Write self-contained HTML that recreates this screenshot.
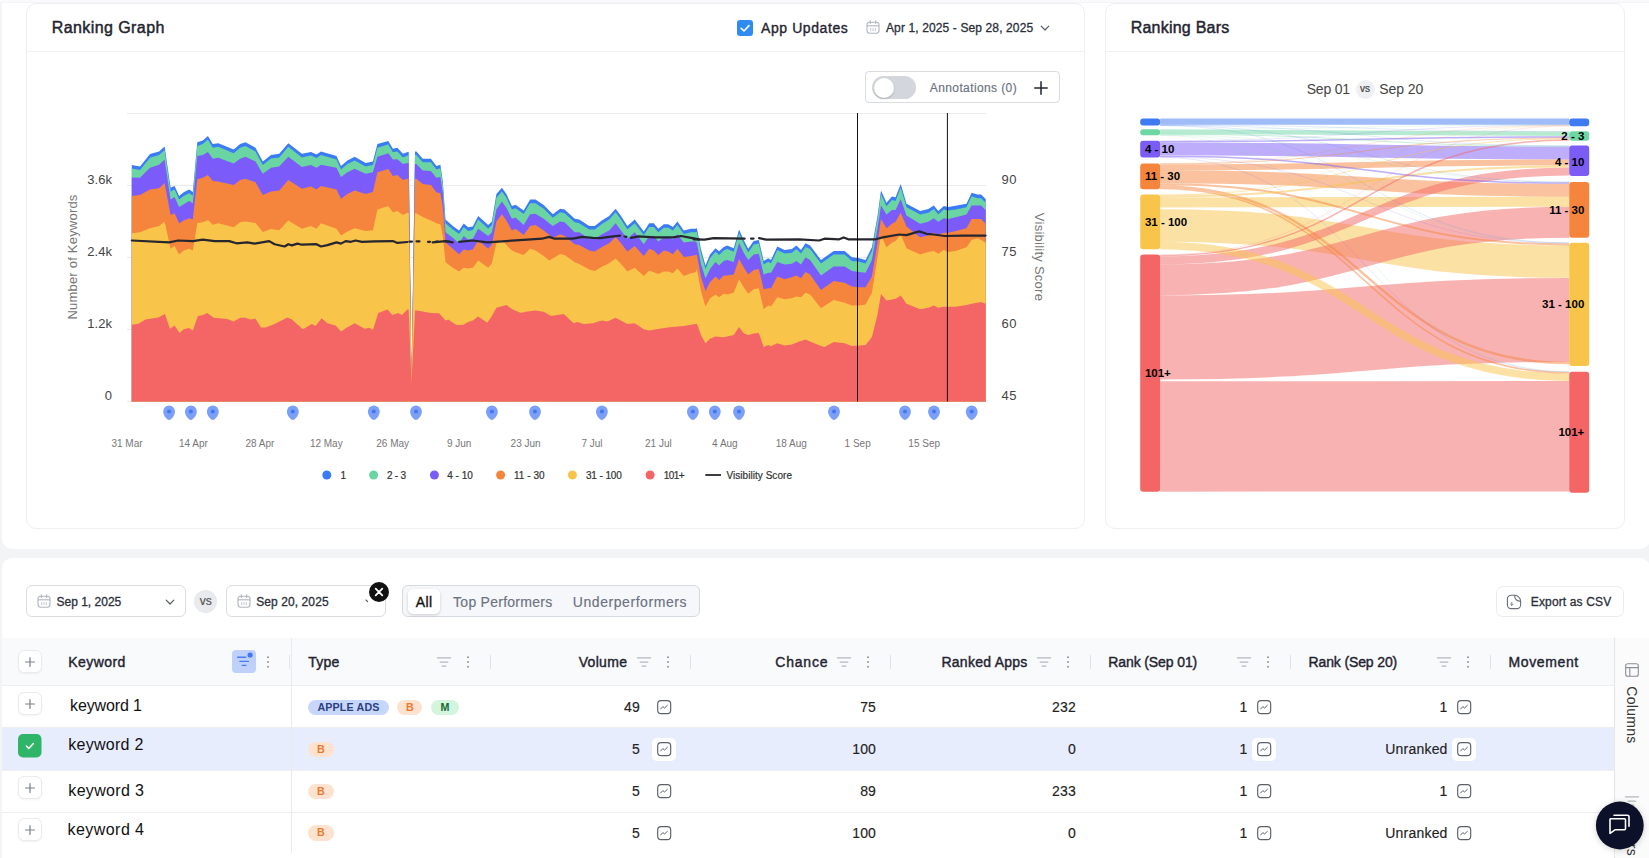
<!DOCTYPE html>
<html><head><meta charset="utf-8"><title>Ranking</title>
<style>
html,body{margin:0;padding:0;}
body{width:1649px;height:858px;overflow:hidden;background:#f3f4f6;position:relative;font-family:"Liberation Sans",sans-serif;}
.t{position:absolute;white-space:nowrap;}
.b{position:absolute;}
svg{overflow:visible;}
</style></head><body>
<div class="b" style="left:1.8px;top:3.0px;width:1648.2px;height:546.3px;background:#fff;border-radius:0 0 10px 10px;"></div>
<div class="b" style="left:0.0px;top:0.0px;width:1649.0px;height:1.6px;background:#fafafc;"></div>
<div class="b" style="left:1.8px;top:557.6px;width:1648.2px;height:312.4px;background:#fff;border-radius:10px 10px 0 0;"></div>
<div class="b" style="left:26.0px;top:3.0px;width:1058.5px;height:525.5px;border:1px solid #edeff2;border-radius:10px;background:#fff;box-sizing:border-box;"></div>
<div class="b" style="left:27.0px;top:51.0px;width:1056.5px;height:1.0px;background:#eef0f2;"></div>
<div class="b" style="left:1105.0px;top:3.0px;width:519.5px;height:525.5px;border:1px solid #edeff2;border-radius:10px;background:#fff;box-sizing:border-box;"></div>
<div class="b" style="left:1106.0px;top:51.0px;width:517.5px;height:1.0px;background:#eef0f2;"></div>
<div class="t" style="left:51.7px;top:17.5px;font-size:16px;color:#1f2430;letter-spacing:0.42px;line-height:20px;-webkit-text-stroke:0.45px #1f2430;">Ranking Graph</div>
<div class="t" style="left:1130.7px;top:17.5px;font-size:16px;color:#1f2430;letter-spacing:0.23px;line-height:20px;-webkit-text-stroke:0.45px #1f2430;">Ranking Bars</div>
<svg class="b" style="left:737.0px;top:19.5px;" width="16" height="16" viewBox="0 0 16 16"><rect x="0" y="0" width="16" height="16" rx="3" fill="#2e8bf0"/><path d="M4.2 8.3 L7 11 L12 5.6" fill="none" stroke="#fff" stroke-width="1.6" stroke-linecap="round" stroke-linejoin="round"/></svg>
<div class="t" style="left:761.1px;top:17.5px;font-size:14px;color:#1f2430;letter-spacing:0.57px;line-height:20px;-webkit-text-stroke:0.35px #1f2430;">App Updates</div>
<svg class="b" style="left:866.0px;top:20.2px;" width="14" height="14.5" viewBox="0 0 14 14.5"><rect x="1" y="2.2" width="12" height="11" rx="2.6" fill="none" stroke="#b0b5c0" stroke-width="1.1"/><path d="M1 5.8H13" stroke="#b0b5c0" stroke-width="1.1"/><path d="M4.3 0.8V3.4M9.7 0.8V3.4" stroke="#b0b5c0" stroke-width="1.1" stroke-linecap="round"/><path d="M4.7 8V11.2M7 8V11.2M9.3 8V11.2" stroke="#b0b5c0" stroke-width="0.75" stroke-linecap="butt"/></svg>
<div class="t" style="left:886.0px;top:17.5px;font-size:12px;color:#2a2f3a;letter-spacing:0.12px;line-height:20px;-webkit-text-stroke:0.3px #2a2f3a;">Apr 1, 2025 - Sep 28, 2025</div>
<svg class="b" style="left:1040.0px;top:23.5px;" width="10" height="8" viewBox="0 0 10 8"><path d="M1.2 2.2 L5 6 L8.8 2.2" fill="none" stroke="#555b66" stroke-width="1.2" stroke-linecap="round" stroke-linejoin="round"/></svg>
<div class="b" style="left:865.0px;top:71.3px;width:195.0px;height:32.2px;border:1px solid #d9dce1;border-radius:4px;box-sizing:border-box;background:#fff;"></div>
<div class="b" style="left:872.2px;top:75.6px;width:43.8px;height:23.8px;background:#d3d6dc;border-radius:12px;"></div>
<div class="b" style="left:874.2px;top:77.5px;width:20.0px;height:20.0px;background:#fff;border-radius:10px;box-shadow:0 1px 2px rgba(0,0,0,.2);"></div>
<div class="t" style="left:929.8px;top:77.5px;font-size:12px;color:#6b7280;letter-spacing:0.39px;line-height:20px;-webkit-text-stroke:0.15px #6b7280;">Annotations (0)</div>
<svg class="b" style="left:1034.0px;top:80.5px;" width="14" height="14" viewBox="0 0 14 14"><path d="M7 0.8V13.2M0.8 7H13.2" stroke="#1f2430" stroke-width="1.5" stroke-linecap="round"/></svg>
<svg class="b" style="left:0.0px;top:0.0px;" width="1100" height="530" viewBox="0 0 1100 530"><path d="M127,113.5 H986" stroke="#e9eaec" stroke-width="1"/><path d="M127,185.5 H986" stroke="#e9eaec" stroke-width="1"/><path d="M127,257.5 H986" stroke="#e9eaec" stroke-width="1"/><path d="M127,329.5 H986" stroke="#e9eaec" stroke-width="1"/><path d="M127,401.5 H986" stroke="#e9eaec" stroke-width="1"/><path d="M131.8,165.0 L131.8,165.0 L140.0,166.5 L150.0,154.1 L159.1,151.4 L164.6,146.5 L170.6,187.8 L174.6,186.0 L179.1,196.0 L183.7,192.3 L189.1,189.6 L192.8,192.0 L197.3,142.3 L202.8,140.5 L207.9,135.9 L212.8,144.1 L218.2,143.2 L233.7,149.6 L240.1,144.1 L245.5,142.3 L255.5,147.8 L262.8,161.4 L271.0,155.0 L279.2,153.8 L288.3,143.2 L301.9,153.8 L311.0,151.9 L316.5,154.5 L321.0,151.4 L336.5,155.9 L341.0,165.9 L347.4,160.5 L354.7,156.8 L365.6,162.9 L372.9,161.4 L377.4,144.1 L388.3,141.0 L392.9,148.7 L397.4,147.8 L402.9,153.8 L407.8,151.9 L408.7,151.9 L411.5,380.5 L415.0,151.4 L416.4,151.4 L422.7,158.7 L430.9,158.7 L436.4,165.9 L440.4,164.7 L442.8,181.4 L445.5,219.6 L452.8,226.0 L459.1,230.5 L463.7,223.6 L468.2,227.3 L472.8,226.5 L478.2,216.0 L488.2,225.1 L491.9,221.4 L496.4,194.1 L501.9,187.8 L506.4,194.1 L511.9,206.0 L515.5,204.7 L523.7,210.5 L530.1,199.6 L535.5,199.6 L543.7,205.1 L552.8,214.2 L560.1,208.7 L564.6,209.6 L574.7,218.7 L579.2,219.6 L589.2,226.0 L594.7,226.0 L601.9,220.5 L609.2,216.0 L615.6,208.7 L621.0,216.0 L627.4,226.0 L634.7,219.6 L643.8,231.4 L649.2,223.3 L653.8,223.3 L658.3,228.7 L663.8,224.2 L668.3,224.2 L672.9,226.9 L677.4,221.4 L683.8,230.5 L691.1,228.7 L695.6,228.7 L696.9,228.2 L700.9,249.1 L705.5,265.5 L710.0,254.6 L715.5,248.2 L719.1,251.3 L723.7,246.9 L727.3,245.5 L733.7,248.2 L739.1,229.5 L743.7,240.0 L748.2,248.8 L753.7,240.9 L758.8,240.0 L763.7,261.0 L768.2,258.2 L771.0,260.0 L777.3,246.4 L784.6,250.0 L791.9,249.1 L796.4,245.5 L801.0,250.0 L805.5,243.3 L810.1,245.5 L821.0,260.0 L833.7,251.0 L844.6,251.0 L851.9,257.3 L859.2,258.2 L865.6,260.0 L871.9,247.3 L877.4,216.4 L881.0,190.6 L886.5,202.7 L891.9,196.4 L895.6,197.3 L900.7,184.0 L906.5,203.7 L920.1,210.9 L928.3,209.1 L933.8,205.5 L938.3,210.9 L943.8,206.0 L948.3,206.9 L955.6,205.8 L966.5,203.7 L971.6,192.7 L977.4,194.6 L981.1,194.6 L985.6,199.1 L985.7,199.1 L985.7,401.4 L131.8,401.4 Z" fill="#3b7cf6"/>
<path d="M131.8,168.6 L131.8,168.6 L140.0,170.1 L150.0,157.7 L159.1,155.0 L164.6,150.1 L170.6,191.4 L174.6,189.6 L179.1,199.6 L183.7,195.9 L189.1,193.2 L192.8,195.6 L197.3,145.9 L202.8,144.1 L207.9,139.5 L212.8,147.7 L218.2,146.8 L233.7,153.2 L240.1,147.7 L245.5,145.9 L255.5,151.4 L262.8,165.0 L271.0,158.6 L279.2,157.4 L288.3,146.8 L301.9,157.4 L311.0,155.5 L316.5,158.1 L321.0,155.0 L336.5,159.5 L341.0,169.5 L347.4,164.1 L354.7,160.4 L365.6,166.5 L372.9,165.0 L377.4,147.7 L388.3,144.6 L392.9,152.3 L397.4,151.4 L402.9,157.4 L407.8,155.5 L408.7,155.5 L411.5,384.1 L415.0,155.0 L416.4,155.0 L422.7,162.3 L430.9,162.3 L436.4,169.5 L440.4,168.3 L442.8,185.0 L445.5,223.2 L452.8,229.6 L459.1,234.1 L463.7,227.2 L468.2,230.9 L472.8,230.1 L478.2,219.6 L488.2,228.7 L491.9,225.0 L496.4,197.7 L501.9,191.4 L506.4,197.7 L511.9,209.6 L515.5,208.3 L523.7,214.1 L530.1,203.2 L535.5,203.2 L543.7,208.7 L552.8,217.8 L560.1,212.3 L564.6,213.2 L574.7,222.3 L579.2,223.2 L589.2,229.6 L594.7,229.6 L601.9,224.1 L609.2,219.6 L615.6,212.3 L621.0,219.6 L627.4,229.6 L634.7,223.2 L643.8,235.0 L649.2,226.9 L653.8,226.9 L658.3,232.3 L663.8,227.8 L668.3,227.8 L672.9,230.5 L677.4,225.0 L683.8,234.1 L691.1,232.3 L695.6,232.3 L696.9,231.8 L700.9,252.7 L705.5,269.1 L710.0,258.2 L715.5,251.8 L719.1,254.9 L723.7,250.5 L727.3,249.1 L733.7,251.8 L739.1,233.1 L743.7,243.6 L748.2,252.4 L753.7,244.5 L758.8,243.6 L763.7,264.6 L768.2,261.8 L771.0,263.6 L777.3,250.0 L784.6,253.6 L791.9,252.7 L796.4,249.1 L801.0,253.6 L805.5,246.9 L810.1,249.1 L821.0,263.6 L833.7,254.6 L844.6,254.6 L851.9,260.9 L859.2,261.8 L865.6,263.6 L871.9,250.9 L877.4,220.0 L881.0,194.2 L886.5,206.3 L891.9,200.0 L895.6,200.9 L900.7,187.6 L906.5,207.3 L920.1,214.5 L928.3,212.7 L933.8,209.1 L938.3,214.5 L943.8,209.6 L948.3,210.5 L955.6,209.4 L966.5,207.3 L971.6,196.3 L977.4,198.2 L981.1,198.2 L985.6,202.7 L985.7,202.7 L985.7,401.4 L131.8,401.4 Z" fill="#6ad5a3"/>
<path d="M131.8,177.4 L131.8,177.4 L140.0,177.8 L150.0,167.8 L159.1,164.7 L164.6,159.6 L170.6,199.6 L174.6,196.9 L179.1,206.9 L183.7,204.2 L189.1,201.1 L192.8,203.2 L197.3,155.9 L202.8,155.0 L207.9,151.9 L212.8,158.7 L218.2,157.8 L233.7,163.6 L240.1,158.7 L245.5,156.8 L255.5,161.4 L262.8,173.8 L271.0,167.8 L279.2,166.5 L288.3,156.8 L301.9,166.9 L311.0,165.0 L316.5,167.8 L321.0,164.7 L336.5,167.8 L341.0,176.9 L347.4,172.3 L354.7,168.7 L365.6,173.8 L372.9,172.3 L377.4,156.8 L388.3,153.2 L392.9,159.6 L397.4,159.2 L402.9,164.1 L407.8,162.9 L408.7,162.9 L411.5,380.8 L415.0,164.1 L416.4,164.1 L422.7,170.5 L430.9,170.9 L436.4,177.8 L440.4,176.9 L442.8,192.3 L445.5,232.3 L452.8,237.8 L459.1,243.3 L463.7,236.0 L468.2,239.6 L472.8,238.7 L478.2,228.7 L488.2,236.0 L491.9,232.3 L496.4,209.6 L501.9,201.4 L506.4,207.8 L511.9,218.7 L515.5,217.4 L523.7,225.1 L530.1,214.2 L535.5,213.8 L543.7,218.7 L552.8,226.0 L560.1,221.4 L564.6,222.3 L574.7,232.3 L579.2,232.3 L589.2,238.7 L594.7,238.7 L601.9,234.2 L609.2,230.5 L615.6,223.3 L621.0,230.5 L627.4,238.7 L634.7,232.3 L643.8,244.2 L649.2,236.0 L653.8,236.0 L658.3,241.4 L663.8,237.4 L668.3,236.9 L672.9,239.6 L677.4,234.2 L683.8,242.4 L691.1,241.4 L695.6,241.4 L696.9,242.8 L700.9,263.7 L705.5,278.2 L710.0,269.1 L715.5,261.9 L719.1,265.5 L723.7,261.0 L727.3,260.0 L733.7,261.9 L739.1,242.8 L743.7,252.8 L748.2,260.0 L753.7,254.6 L758.8,253.7 L763.7,274.6 L768.2,272.8 L771.0,272.8 L777.3,261.9 L784.6,264.6 L791.9,263.7 L796.4,261.0 L801.0,264.6 L805.5,257.3 L810.1,260.0 L821.0,275.5 L833.7,266.4 L844.6,266.4 L851.9,271.0 L859.2,271.9 L865.6,272.8 L871.9,260.0 L877.4,229.1 L881.0,205.5 L886.5,214.6 L891.9,210.0 L895.6,210.0 L900.7,199.1 L906.5,215.5 L920.1,223.7 L928.3,221.8 L933.8,218.2 L938.3,221.8 L943.8,218.2 L948.3,219.1 L955.6,217.3 L966.5,214.6 L971.6,205.5 L977.4,205.5 L981.1,205.5 L985.6,210.0 L985.7,210.0 L985.7,401.4 L131.8,401.4 Z" fill="#7b5cfa"/>
<path d="M131.8,196.0 L131.8,196.0 L140.0,195.1 L150.0,189.6 L159.1,188.3 L164.6,182.9 L170.6,215.1 L174.6,213.2 L179.1,223.3 L183.7,220.5 L189.1,218.2 L192.8,219.6 L197.3,179.2 L202.8,177.8 L207.9,175.0 L212.8,181.0 L218.2,181.4 L233.7,185.0 L240.1,180.0 L245.5,178.7 L255.5,182.3 L262.8,195.1 L271.0,191.4 L279.2,190.5 L288.3,180.0 L301.9,188.7 L311.0,186.5 L316.5,189.6 L321.0,186.0 L336.5,189.6 L341.0,198.7 L347.4,194.1 L354.7,190.5 L365.6,194.1 L372.9,192.0 L377.4,172.3 L388.3,169.0 L392.9,176.0 L397.4,175.0 L402.9,180.0 L407.8,178.7 L408.7,178.7 L411.5,381.2 L415.0,178.7 L416.4,178.7 L422.7,184.1 L430.9,185.0 L436.4,192.3 L440.4,193.2 L442.8,206.9 L445.5,242.4 L452.8,248.7 L459.1,254.2 L463.7,249.6 L468.2,250.5 L472.8,249.6 L478.2,240.5 L488.2,248.7 L491.9,244.2 L496.4,221.4 L501.9,214.2 L506.4,220.5 L511.9,230.5 L515.5,228.7 L523.7,235.1 L530.1,226.0 L535.5,225.1 L543.7,230.5 L552.8,237.8 L560.1,234.2 L564.6,236.0 L574.7,244.2 L579.2,245.1 L589.2,250.5 L594.7,251.5 L601.9,246.9 L609.2,243.3 L615.6,236.9 L621.0,243.3 L627.4,251.5 L634.7,246.0 L643.8,256.0 L649.2,248.7 L653.8,250.5 L658.3,255.1 L663.8,250.5 L668.3,251.5 L672.9,254.2 L677.4,248.7 L683.8,256.9 L691.1,256.0 L695.6,255.1 L696.9,255.0 L700.9,276.4 L705.5,291.0 L710.0,281.9 L715.5,276.4 L719.1,280.1 L723.7,275.5 L727.3,275.5 L733.7,274.6 L739.1,259.1 L743.7,267.3 L748.2,274.6 L753.7,270.1 L758.8,269.1 L763.7,289.2 L768.2,288.2 L771.0,288.2 L777.3,276.4 L784.6,279.2 L791.9,277.3 L796.4,275.5 L801.0,278.2 L805.5,271.9 L810.1,274.6 L821.0,290.1 L833.7,281.0 L844.6,282.8 L851.9,286.4 L859.2,287.3 L865.6,287.3 L871.9,276.4 L877.4,243.7 L881.0,219.1 L886.5,228.2 L891.9,223.7 L895.6,221.8 L900.7,212.7 L906.5,226.4 L920.1,237.3 L928.3,235.5 L933.8,232.8 L938.3,234.6 L943.8,232.8 L948.3,232.8 L955.6,230.9 L966.5,228.2 L971.6,219.1 L977.4,219.1 L981.1,219.1 L985.6,223.7 L985.7,223.7 L985.7,401.4 L131.8,401.4 Z" fill="#f5853d"/>
<path d="M131.8,233.3 L131.8,233.3 L140.0,232.3 L150.0,228.3 L159.1,226.0 L164.6,221.4 L170.6,248.7 L174.6,246.0 L179.1,254.5 L183.7,250.5 L189.1,248.7 L192.8,250.5 L197.3,222.9 L202.8,222.3 L207.9,220.0 L212.8,224.7 L218.2,223.3 L233.7,227.3 L240.1,222.3 L245.5,221.4 L255.5,222.9 L262.8,232.0 L271.0,229.1 L279.2,230.2 L288.3,220.5 L301.9,228.7 L311.0,226.0 L316.5,228.7 L321.0,223.3 L336.5,228.7 L341.0,235.6 L347.4,231.4 L354.7,228.3 L365.6,230.9 L372.9,230.2 L377.4,209.6 L388.3,206.0 L392.9,212.3 L397.4,210.9 L402.9,215.1 L407.8,212.7 L408.7,212.7 L411.5,381.6 L415.0,213.2 L416.4,213.2 L422.7,216.9 L430.9,220.5 L436.4,223.3 L440.4,224.2 L442.8,236.0 L445.5,262.3 L452.8,267.7 L459.1,271.4 L463.7,267.7 L468.2,268.6 L472.8,267.7 L478.2,260.5 L488.2,267.7 L491.9,263.2 L496.4,243.3 L501.9,239.6 L506.4,245.1 L511.9,250.5 L516.4,252.4 L523.7,255.1 L530.1,248.7 L535.5,250.5 L543.7,256.0 L549.2,260.5 L552.8,258.6 L560.1,254.1 L564.6,255.0 L574.7,262.3 L579.2,264.1 L589.2,269.6 L594.7,271.0 L601.9,266.8 L609.2,263.2 L615.6,258.6 L621.0,264.1 L627.4,271.4 L634.7,267.7 L643.8,275.9 L649.2,270.5 L653.8,272.3 L658.3,274.1 L663.8,271.4 L668.3,271.4 L672.9,273.2 L677.4,268.6 L683.8,275.9 L691.1,273.2 L695.6,272.3 L696.9,269.1 L700.9,291.0 L705.5,306.4 L710.0,298.3 L715.5,294.6 L719.1,297.3 L723.7,293.7 L727.3,294.6 L733.7,292.8 L739.1,279.2 L743.7,287.3 L748.2,293.7 L753.7,289.2 L758.8,288.2 L763.7,309.2 L768.2,305.5 L771.0,306.4 L777.3,297.3 L784.6,299.2 L791.9,298.3 L796.4,296.4 L801.0,297.3 L805.5,292.8 L810.1,294.6 L821.0,308.3 L833.7,300.1 L844.6,302.8 L851.9,305.5 L859.2,305.5 L865.6,304.6 L871.9,292.8 L877.4,258.2 L881.0,235.5 L886.5,247.3 L891.9,242.8 L895.6,240.9 L900.7,234.6 L906.5,248.2 L920.1,254.6 L928.3,251.9 L933.8,251.0 L938.3,253.7 L943.8,250.0 L948.3,251.9 L955.6,251.0 L966.5,247.3 L971.6,240.0 L977.4,238.2 L981.1,240.0 L985.6,242.8 L985.7,242.8 L985.7,401.4 L131.8,401.4 Z" fill="#f9c44a"/>
<path d="M131.8,324.7 L131.8,324.7 L138.2,323.8 L145.5,319.6 L158.2,317.4 L164.9,314.1 L170.0,328.7 L174.6,325.6 L179.5,332.9 L183.7,329.2 L189.1,328.1 L192.8,330.5 L197.9,315.9 L202.8,315.0 L207.3,312.9 L213.7,317.8 L227.3,319.0 L233.7,321.4 L240.1,317.8 L245.5,317.8 L250.1,319.6 L255.5,318.7 L261.0,327.4 L265.5,327.4 L274.6,324.1 L287.4,317.4 L291.9,319.6 L302.8,329.2 L311.9,324.1 L315.6,326.0 L321.6,318.3 L327.4,323.2 L335.6,325.6 L341.0,331.4 L346.5,327.8 L354.7,323.2 L364.7,328.7 L369.2,327.8 L372.9,330.0 L378.3,312.9 L387.4,309.6 L392.5,315.0 L398.0,312.9 L402.0,315.0 L407.4,309.6 L408.7,309.6 L411.5,382.5 L415.0,310.5 L416.4,310.5 L422.7,311.4 L430.9,312.9 L439.1,313.2 L445.5,320.5 L448.2,319.6 L456.4,325.0 L462.8,325.0 L468.2,321.9 L472.8,320.5 L478.2,316.5 L487.3,322.7 L491.9,315.9 L496.4,307.8 L506.4,305.0 L512.8,309.6 L521.0,312.9 L525.5,311.8 L535.5,310.5 L543.7,311.8 L551.0,315.9 L563.7,314.1 L573.7,323.2 L577.4,321.9 L583.7,324.1 L592.8,323.2 L601.9,320.5 L607.4,321.4 L615.6,317.8 L627.4,324.1 L634.7,323.2 L643.8,329.2 L649.2,330.5 L654.7,329.6 L667.4,327.4 L683.8,326.0 L695.6,324.1 L696.9,323.8 L700.9,335.0 L705.5,343.2 L710.0,338.7 L715.5,336.5 L723.7,337.2 L733.7,335.0 L739.1,326.9 L743.7,333.2 L748.2,335.0 L753.7,333.6 L758.8,332.9 L763.7,346.9 L768.2,345.1 L771.0,346.3 L777.3,343.2 L784.6,345.6 L791.9,344.5 L799.2,341.4 L805.5,339.6 L810.1,341.4 L821.0,346.0 L824.6,346.9 L833.7,342.0 L844.6,343.2 L851.9,346.0 L859.2,345.6 L865.6,345.1 L871.9,336.9 L877.4,315.0 L881.0,294.1 L886.5,300.5 L891.9,299.6 L895.6,298.7 L900.7,295.4 L906.5,303.8 L920.1,309.2 L928.3,307.8 L933.8,305.6 L938.3,307.8 L943.8,306.8 L948.3,306.8 L955.6,306.8 L966.5,305.0 L971.6,303.8 L981.1,301.9 L985.6,303.8 L985.7,303.8 L985.7,401.4 L131.8,401.4 Z" fill="#f46666"/>
<path d="M131.8,240.5 L169.1,242.4 L178.2,240.5 L192.8,241.1 L202.8,239.6 L214.6,241.1 L229.2,241.1 L236.4,243.3 L247.3,242.4 L254.6,243.6 L269.2,241.1 L274.6,244.2 L284.6,246.5 L288.3,244.2 L291.9,245.4 L297.4,243.6 L301.9,244.7 L316.5,244.2 L321.0,246.5 L327.4,245.1 L336.5,242.4 L341.0,243.6 L345.6,241.1 L351.0,241.8 L355.6,240.5 L362.0,241.8 L374.7,241.4 L392.9,241.1 L397.4,242.9 L407.4,242.0" fill="none" stroke="#26262e" stroke-width="2.2" stroke-linejoin="round" stroke-linecap="round"/>
<path d="M432.7,242.4 L445.5,241.1 L452.8,242.4" fill="none" stroke="#26262e" stroke-width="2.2" stroke-linejoin="round" stroke-linecap="round"/>
<path d="M459.1,241.8 L472.8,240.5 L487.3,242.4 L501.9,241.4 L527.3,239.6 L541.9,238.7 L549.2,236.9 L554.6,238.7 L572.8,238.7 L581.9,236.9 L592.8,237.8 L600.1,238.2 L609.2,236.9 L620.1,235.6" fill="none" stroke="#26262e" stroke-width="2.2" stroke-linejoin="round" stroke-linecap="round"/>
<path d="M631.0,237.8 L638.3,236.4 L654.7,237.4 L672.9,237.4 L681.1,236.0 L691.1,237.8 L699.3,239.3" fill="none" stroke="#26262e" stroke-width="2.2" stroke-linejoin="round" stroke-linecap="round"/>
<path d="M693.6,239.3 L704.6,239.6 L713.7,238.2 L744.6,238.7" fill="none" stroke="#26262e" stroke-width="2.2" stroke-linejoin="round" stroke-linecap="round"/>
<path d="M759.1,238.2 L766.4,239.6 L799.2,239.3 L819.2,240.5 L824.6,238.7 L839.2,239.3 L843.7,237.4 L848.3,239.3 L875.6,239.3 L882.8,237.4 L899.2,234.5 L906.5,235.1 L919.2,231.4 L926.5,233.8 L933.8,234.5 L944.7,236.0 L962.9,235.6 L985.6,235.6" fill="none" stroke="#26262e" stroke-width="2.2" stroke-linejoin="round" stroke-linecap="round"/>
<path d="M409.5,241.6 L412.0,241.6" stroke="#26262e" stroke-width="2.2" stroke-linecap="round"/>
<path d="M416.5,241.3 L419.5,241.3" stroke="#26262e" stroke-width="2.2" stroke-linecap="round"/>
<path d="M428.0,241.8 L430.0,241.8" stroke="#26262e" stroke-width="2.2" stroke-linecap="round"/>
<path d="M436.0,241.5 L438.0,241.5" stroke="#26262e" stroke-width="2.2" stroke-linecap="round"/>
<path d="M446.0,241.5 L449.0,241.5" stroke="#26262e" stroke-width="2.2" stroke-linecap="round"/>
<path d="M624.5,236.5 L626.5,236.8" stroke="#26262e" stroke-width="2.2" stroke-linecap="round"/>
<path d="M751.0,238.6 L753.5,238.6" stroke="#26262e" stroke-width="2.2" stroke-linecap="round"/><path d="M857.5,113 V401.5" stroke="#111" stroke-width="1"/><path d="M947.4,113 V401.5" stroke="#111" stroke-width="1"/><path d="M169.1,419.9 C166.9,419.9 163.2,415.5 163.2,411.5 A5.9,5.9 0 1 1 175.0,411.5 C175.0,415.5 171.3,419.9 169.1,419.9Z" fill="#7c9ff8"/><circle cx="169.1" cy="411.4" r="2" fill="#3f78f1"/><path d="M190.9,419.9 C188.7,419.9 185.0,415.5 185.0,411.5 A5.9,5.9 0 1 1 196.8,411.5 C196.8,415.5 193.1,419.9 190.9,419.9Z" fill="#7c9ff8"/><circle cx="190.9" cy="411.4" r="2" fill="#3f78f1"/><path d="M212.8,419.9 C210.6,419.9 206.9,415.5 206.9,411.5 A5.9,5.9 0 1 1 218.7,411.5 C218.7,415.5 215.0,419.9 212.8,419.9Z" fill="#7c9ff8"/><circle cx="212.8" cy="411.4" r="2" fill="#3f78f1"/><path d="M292.8,419.9 C290.6,419.9 286.9,415.5 286.9,411.5 A5.9,5.9 0 1 1 298.7,411.5 C298.7,415.5 295.0,419.9 292.8,419.9Z" fill="#7c9ff8"/><circle cx="292.8" cy="411.4" r="2" fill="#3f78f1"/><path d="M373.8,419.9 C371.6,419.9 367.9,415.5 367.9,411.5 A5.9,5.9 0 1 1 379.7,411.5 C379.7,415.5 376.0,419.9 373.8,419.9Z" fill="#7c9ff8"/><circle cx="373.8" cy="411.4" r="2" fill="#3f78f1"/><path d="M416.0,419.9 C413.8,419.9 410.1,415.5 410.1,411.5 A5.9,5.9 0 1 1 421.9,411.5 C421.9,415.5 418.2,419.9 416.0,419.9Z" fill="#7c9ff8"/><circle cx="416.0" cy="411.4" r="2" fill="#3f78f1"/><path d="M491.9,419.9 C489.7,419.9 486.0,415.5 486.0,411.5 A5.9,5.9 0 1 1 497.8,411.5 C497.8,415.5 494.1,419.9 491.9,419.9Z" fill="#7c9ff8"/><circle cx="491.9" cy="411.4" r="2" fill="#3f78f1"/><path d="M535.0,419.9 C532.8,419.9 529.1,415.5 529.1,411.5 A5.9,5.9 0 1 1 540.9,411.5 C540.9,415.5 537.2,419.9 535.0,419.9Z" fill="#7c9ff8"/><circle cx="535.0" cy="411.4" r="2" fill="#3f78f1"/><path d="M601.9,419.9 C599.7,419.9 596.0,415.5 596.0,411.5 A5.9,5.9 0 1 1 607.8,411.5 C607.8,415.5 604.1,419.9 601.9,419.9Z" fill="#7c9ff8"/><circle cx="601.9" cy="411.4" r="2" fill="#3f78f1"/><path d="M692.9,419.9 C690.7,419.9 687.0,415.5 687.0,411.5 A5.9,5.9 0 1 1 698.8,411.5 C698.8,415.5 695.1,419.9 692.9,419.9Z" fill="#7c9ff8"/><circle cx="692.9" cy="411.4" r="2" fill="#3f78f1"/><path d="M714.8,419.9 C712.6,419.9 708.9,415.5 708.9,411.5 A5.9,5.9 0 1 1 720.7,411.5 C720.7,415.5 717.0,419.9 714.8,419.9Z" fill="#7c9ff8"/><circle cx="714.8" cy="411.4" r="2" fill="#3f78f1"/><path d="M739.0,419.9 C736.8,419.9 733.1,415.5 733.1,411.5 A5.9,5.9 0 1 1 744.9,411.5 C744.9,415.5 741.2,419.9 739.0,419.9Z" fill="#7c9ff8"/><circle cx="739.0" cy="411.4" r="2" fill="#3f78f1"/><path d="M834.0,419.9 C831.8,419.9 828.1,415.5 828.1,411.5 A5.9,5.9 0 1 1 839.9,411.5 C839.9,415.5 836.2,419.9 834.0,419.9Z" fill="#7c9ff8"/><circle cx="834.0" cy="411.4" r="2" fill="#3f78f1"/><path d="M905.0,419.9 C902.8,419.9 899.1,415.5 899.1,411.5 A5.9,5.9 0 1 1 910.9,411.5 C910.9,415.5 907.2,419.9 905.0,419.9Z" fill="#7c9ff8"/><circle cx="905.0" cy="411.4" r="2" fill="#3f78f1"/><path d="M934.0,419.9 C931.8,419.9 928.1,415.5 928.1,411.5 A5.9,5.9 0 1 1 939.9,411.5 C939.9,415.5 936.2,419.9 934.0,419.9Z" fill="#7c9ff8"/><circle cx="934.0" cy="411.4" r="2" fill="#3f78f1"/><path d="M971.7,419.9 C969.5,419.9 965.8,415.5 965.8,411.5 A5.9,5.9 0 1 1 977.6,411.5 C977.6,415.5 973.9,419.9 971.7,419.9Z" fill="#7c9ff8"/><circle cx="971.7" cy="411.4" r="2" fill="#3f78f1"/><circle cx="326.8" cy="475" r="4.5" fill="#3b7cf6"/><circle cx="373.6" cy="475" r="4.5" fill="#6ad5a3"/><circle cx="434.4" cy="475" r="4.5" fill="#7b5cfa"/><circle cx="500.6" cy="475" r="4.5" fill="#f5853d"/><circle cx="572.4" cy="475" r="4.5" fill="#f9c44a"/><circle cx="650.1" cy="475" r="4.5" fill="#f46666"/><path d="M705.3,475 H721" stroke="#26262e" stroke-width="1.8"/></svg>
<div class="t" style="right:1537.1px;top:170.0px;font-size:13px;color:#444;letter-spacing:0.00px;line-height:20px;">3.6k</div>
<div class="t" style="right:1537.1px;top:242.3px;font-size:13px;color:#444;letter-spacing:0.00px;line-height:20px;">2.4k</div>
<div class="t" style="right:1537.1px;top:314.2px;font-size:13px;color:#444;letter-spacing:0.00px;line-height:20px;">1.2k</div>
<div class="t" style="right:1537.1px;top:386.0px;font-size:13px;color:#444;letter-spacing:0.00px;line-height:20px;">0</div>
<div class="t" style="left:1001.5px;top:170.0px;font-size:13px;color:#444;letter-spacing:0.44px;line-height:20px;">90</div>
<div class="t" style="left:1001.5px;top:242.3px;font-size:13px;color:#444;letter-spacing:0.44px;line-height:20px;">75</div>
<div class="t" style="left:1001.5px;top:314.2px;font-size:13px;color:#444;letter-spacing:0.44px;line-height:20px;">60</div>
<div class="t" style="left:1001.5px;top:386.0px;font-size:13px;color:#444;letter-spacing:0.44px;line-height:20px;">45</div>
<div class="t" style="left:27.0px;width:200px;text-align:center;top:434.1px;font-size:10px;color:#777;letter-spacing:0.00px;line-height:20px;">31 Mar</div>
<div class="t" style="left:93.4px;width:200px;text-align:center;top:434.1px;font-size:10px;color:#777;letter-spacing:0.00px;line-height:20px;">14 Apr</div>
<div class="t" style="left:159.9px;width:200px;text-align:center;top:434.1px;font-size:10px;color:#777;letter-spacing:0.00px;line-height:20px;">28 Apr</div>
<div class="t" style="left:226.3px;width:200px;text-align:center;top:434.1px;font-size:10px;color:#777;letter-spacing:0.00px;line-height:20px;">12 May</div>
<div class="t" style="left:292.7px;width:200px;text-align:center;top:434.1px;font-size:10px;color:#777;letter-spacing:0.00px;line-height:20px;">26 May</div>
<div class="t" style="left:359.2px;width:200px;text-align:center;top:434.1px;font-size:10px;color:#777;letter-spacing:0.00px;line-height:20px;">9 Jun</div>
<div class="t" style="left:425.6px;width:200px;text-align:center;top:434.1px;font-size:10px;color:#777;letter-spacing:0.00px;line-height:20px;">23 Jun</div>
<div class="t" style="left:492.0px;width:200px;text-align:center;top:434.1px;font-size:10px;color:#777;letter-spacing:0.00px;line-height:20px;">7 Jul</div>
<div class="t" style="left:558.4px;width:200px;text-align:center;top:434.1px;font-size:10px;color:#777;letter-spacing:0.00px;line-height:20px;">21 Jul</div>
<div class="t" style="left:624.9px;width:200px;text-align:center;top:434.1px;font-size:10px;color:#777;letter-spacing:0.00px;line-height:20px;">4 Aug</div>
<div class="t" style="left:691.3px;width:200px;text-align:center;top:434.1px;font-size:10px;color:#777;letter-spacing:0.00px;line-height:20px;">18 Aug</div>
<div class="t" style="left:757.7px;width:200px;text-align:center;top:434.1px;font-size:10px;color:#777;letter-spacing:0.00px;line-height:20px;">1 Sep</div>
<div class="t" style="left:824.2px;width:200px;text-align:center;top:434.1px;font-size:10px;color:#777;letter-spacing:0.00px;line-height:20px;">15 Sep</div>
<div class="t" style="left:340.6px;top:465.5px;font-size:10px;color:#333;letter-spacing:0.00px;line-height:20px;-webkit-text-stroke:0.2px #333;">1</div>
<div class="t" style="left:386.9px;top:465.5px;font-size:10px;color:#333;letter-spacing:-0.20px;line-height:20px;-webkit-text-stroke:0.2px #333;">2 - 3</div>
<div class="t" style="left:447.3px;top:465.5px;font-size:10px;color:#333;letter-spacing:-0.01px;line-height:20px;-webkit-text-stroke:0.2px #333;">4 - 10</div>
<div class="t" style="left:514.0px;top:465.5px;font-size:10px;color:#333;letter-spacing:0.03px;line-height:20px;-webkit-text-stroke:0.2px #333;">11 - 30</div>
<div class="t" style="left:585.9px;top:465.5px;font-size:10px;color:#333;letter-spacing:-0.10px;line-height:20px;-webkit-text-stroke:0.2px #333;">31 - 100</div>
<div class="t" style="left:663.8px;top:465.5px;font-size:10px;color:#333;letter-spacing:-0.54px;line-height:20px;-webkit-text-stroke:0.2px #333;">101+</div>
<div class="t" style="left:726.5px;top:465.5px;font-size:10px;color:#333;letter-spacing:0.04px;line-height:20px;-webkit-text-stroke:0.2px #333;">Visibility Score</div>
<div class="t" style="left:-77.4px;top:247.0px;width:300px;text-align:center;font-size:13px;color:#777;letter-spacing:0.21px;line-height:20px;transform:rotate(-90deg);">Number of Keywords</div>
<div class="t" style="left:888.6px;top:247.0px;width:300px;text-align:center;font-size:13px;color:#777;letter-spacing:0.25px;line-height:20px;transform:rotate(90deg);">Visibility Score</div>
<svg class="b" style="left:1100.0px;top:100.0px;" width="540" height="420" viewBox="1100 100 540 420"><path d="M1160.2,436.5 C1364.7,436.5 1364.7,436.2 1569.2,436.2" fill="none" stroke="#f46666" stroke-opacity="0.50" stroke-width="110.40"/>
<path d="M1160.2,337.4 C1364.7,337.4 1364.7,319.9 1569.2,319.9" fill="none" stroke="#f46666" stroke-opacity="0.50" stroke-width="84.00"/>
<path d="M1160.2,225.4 C1364.7,225.4 1364.7,261.6 1569.2,261.6" fill="none" stroke="#f9c44a" stroke-opacity="0.50" stroke-width="32.50"/>
<path d="M1160.2,279.9 C1364.7,279.9 1364.7,222.2 1569.2,222.2" fill="none" stroke="#f46666" stroke-opacity="0.50" stroke-width="31.00"/>
<path d="M1160.2,148.9 C1364.7,148.9 1364.7,153.0 1569.2,153.0" fill="none" stroke="#7b5cf5" stroke-opacity="0.50" stroke-width="12.90"/>
<path d="M1160.2,176.8 C1364.7,176.8 1364.7,190.2 1569.2,190.2" fill="none" stroke="#f5853d" stroke-opacity="0.50" stroke-width="12.90"/>
<path d="M1160.2,202.5 C1364.7,202.5 1364.7,201.7 1569.2,201.7" fill="none" stroke="#f9c44a" stroke-opacity="0.50" stroke-width="10.00"/>
<path d="M1160.2,260.4 C1364.7,260.4 1364.7,171.5 1569.2,171.5" fill="none" stroke="#f46666" stroke-opacity="0.50" stroke-width="8.00"/>
<path d="M1160.2,245.4 C1364.7,245.4 1364.7,377.2 1569.2,377.2" fill="none" stroke="#f9c44a" stroke-opacity="0.50" stroke-width="7.50"/>
<path d="M1160.2,121.7 C1364.7,121.7 1364.7,121.7 1569.2,121.7" fill="none" stroke="#3f7af2" stroke-opacity="0.50" stroke-width="6.30"/>
<path d="M1160.2,167.4 C1364.7,167.4 1364.7,162.5 1569.2,162.5" fill="none" stroke="#f5853d" stroke-opacity="0.50" stroke-width="6.00"/>
<path d="M1160.2,131.7 C1364.7,131.7 1364.7,133.9 1569.2,133.9" fill="none" stroke="#6ed7a3" stroke-opacity="0.50" stroke-width="4.40"/>
<path d="M1160.2,186.5 C1364.7,186.5 1364.7,363.1 1569.2,363.1" fill="none" stroke="#f5853d" stroke-opacity="0.50" stroke-width="2.40"/>
<path d="M1160.2,184.3 C1364.7,184.3 1364.7,244.4 1569.2,244.4" fill="none" stroke="#f5853d" stroke-opacity="0.50" stroke-width="2.00"/>
<path d="M1160.2,196.5 C1364.7,196.5 1364.7,166.5 1569.2,166.5" fill="none" stroke="#f9c44a" stroke-opacity="0.50" stroke-width="2.00"/>
<path d="M1160.2,141.8 C1364.7,141.8 1364.7,136.9 1569.2,136.9" fill="none" stroke="#7b5cf5" stroke-opacity="0.50" stroke-width="1.50"/>
<path d="M1160.2,156.2 C1364.7,156.2 1364.7,183.1 1569.2,183.1" fill="none" stroke="#7b5cf5" stroke-opacity="0.50" stroke-width="1.50"/>
<path d="M1160.2,188.5 C1364.7,188.5 1364.7,372.8 1569.2,372.8" fill="none" stroke="#f5853d" stroke-opacity="0.50" stroke-width="1.50"/>
<path d="M1160.2,255.7 C1364.7,255.7 1364.7,140.0 1569.2,140.0" fill="none" stroke="#f46666" stroke-opacity="0.50" stroke-width="1.50"/>
<path d="M1160.2,134.3 C1364.7,134.3 1364.7,146.2 1569.2,146.2" fill="none" stroke="#6ed7a3" stroke-opacity="0.50" stroke-width="0.80"/>
<path d="M1160.2,164.0 C1364.7,164.0 1364.7,138.0 1569.2,138.0" fill="none" stroke="#f5853d" stroke-opacity="0.50" stroke-width="0.80"/>
<path d="M1160.2,195.1 C1364.7,195.1 1364.7,138.8 1569.2,138.8" fill="none" stroke="#f9c44a" stroke-opacity="0.50" stroke-width="0.80"/>
<path d="M1160.2,125.0 C1364.7,125.0 1364.7,131.5 1569.2,131.5" fill="none" stroke="#3f7af2" stroke-opacity="0.35" stroke-width="0.45"/>
<path d="M1160.2,157.1 C1364.7,157.1 1364.7,243.2 1569.2,243.2" fill="none" stroke="#7b5cf5" stroke-opacity="0.35" stroke-width="0.45"/>
<path d="M1160.2,254.7 C1364.7,254.7 1364.7,126.0 1569.2,126.0" fill="none" stroke="#f46666" stroke-opacity="0.35" stroke-width="0.45"/>
<path d="M1160.2,129.3 C1364.7,129.3 1364.7,125.0 1569.2,125.0" fill="none" stroke="#6ed7a3" stroke-opacity="0.35" stroke-width="0.45"/>
<path d="M1160.2,134.9 C1364.7,134.9 1364.7,182.2 1569.2,182.2" fill="none" stroke="#6ed7a3" stroke-opacity="0.35" stroke-width="0.45"/>
<path d="M1160.2,140.8 C1364.7,140.8 1364.7,125.2 1569.2,125.2" fill="none" stroke="#7b5cf5" stroke-opacity="0.35" stroke-width="0.45"/>
<path d="M1160.2,125.3 C1364.7,125.3 1364.7,145.7 1569.2,145.7" fill="none" stroke="#3f7af2" stroke-opacity="0.35" stroke-width="0.45"/>
<path d="M1160.2,135.1 C1364.7,135.1 1364.7,242.9 1569.2,242.9" fill="none" stroke="#6ed7a3" stroke-opacity="0.35" stroke-width="0.45"/>
<path d="M1160.2,157.4 C1364.7,157.4 1364.7,371.9 1569.2,371.9" fill="none" stroke="#7b5cf5" stroke-opacity="0.35" stroke-width="0.45"/>
<path d="M1160.2,163.5 C1364.7,163.5 1364.7,125.5 1569.2,125.5" fill="none" stroke="#f5853d" stroke-opacity="0.35" stroke-width="0.45"/>
<path d="M1160.2,194.6 C1364.7,194.6 1364.7,125.7 1569.2,125.7" fill="none" stroke="#f9c44a" stroke-opacity="0.35" stroke-width="0.45"/>
<path d="M1160.2,125.5 C1364.7,125.5 1364.7,182.0 1569.2,182.0" fill="none" stroke="#3f7af2" stroke-opacity="0.35" stroke-width="0.45"/>
<path d="M1160.2,125.5 C1364.7,125.5 1364.7,242.8 1569.2,242.8" fill="none" stroke="#3f7af2" stroke-opacity="0.35" stroke-width="0.45"/>
<path d="M1160.2,135.3 C1364.7,135.3 1364.7,371.8 1569.2,371.8" fill="none" stroke="#6ed7a3" stroke-opacity="0.35" stroke-width="0.45"/>
<rect x="1140.2" y="118.5" width="20.0" height="7.1" rx="3.0" fill="#3f7af2"/>
<rect x="1569.2" y="118.5" width="20.0" height="7.7" rx="3.0" fill="#3f7af2"/>
<rect x="1140.2" y="129.2" width="20.0" height="6.0" rx="3.0" fill="#6ed7a3"/>
<rect x="1569.2" y="131.3" width="20.0" height="9.4" rx="3.0" fill="#6ed7a3"/>
<rect x="1140.2" y="140.7" width="20.0" height="16.8" rx="3.0" fill="#7b5cf5"/>
<rect x="1569.2" y="145.6" width="20.0" height="30.3" rx="3.0" fill="#7b5cf5"/>
<rect x="1140.2" y="163.4" width="20.0" height="25.8" rx="3.0" fill="#f5853d"/>
<rect x="1569.2" y="181.9" width="20.0" height="55.8" rx="3.0" fill="#f5853d"/>
<rect x="1140.2" y="194.5" width="20.0" height="54.7" rx="3.0" fill="#f9c44a"/>
<rect x="1569.2" y="242.7" width="20.0" height="123.3" rx="3.0" fill="#f9c44a"/>
<rect x="1140.2" y="254.5" width="20.0" height="237.3" rx="3.0" fill="#f46666"/>
<rect x="1569.2" y="371.7" width="20.0" height="121.0" rx="3.0" fill="#f46666"/></svg>
<div class="t" style="left:1306.7px;top:79.3px;font-size:14px;color:#444;letter-spacing:-0.21px;line-height:20px;">Sep 01</div>
<div class="b" style="left:1355.5px;top:79.8px;width:19.0px;height:19.0px;background:#eef0f3;border-radius:10px;"></div>
<div class="t" style="left:1265.0px;width:200px;text-align:center;top:79.0px;font-size:10px;color:#444;letter-spacing:0.00px;line-height:20px;-webkit-text-stroke:0.2px #444;">vs</div>
<div class="t" style="left:1379.3px;top:79.3px;font-size:14px;color:#444;letter-spacing:-0.07px;line-height:20px;">Sep 20</div>
<div class="t" style="left:1144.9px;top:139.4px;font-size:11.5px;color:#000;letter-spacing:-0.00px;line-height:20px;font-weight:700;">4 - 10</div>
<div class="t" style="left:1144.9px;top:166.3px;font-size:11.5px;color:#000;letter-spacing:-0.00px;line-height:20px;font-weight:700;">11 - 30</div>
<div class="t" style="left:1144.9px;top:212.3px;font-size:11.5px;color:#000;letter-spacing:-0.00px;line-height:20px;font-weight:700;">31 - 100</div>
<div class="t" style="left:1144.9px;top:363.3px;font-size:11.5px;color:#000;letter-spacing:-0.00px;line-height:20px;font-weight:700;">101+</div>
<div class="t" style="right:64.7px;top:126.3px;font-size:11.5px;color:#000;letter-spacing:0.00px;line-height:20px;font-weight:700;">2 - 3</div>
<div class="t" style="right:64.7px;top:151.5px;font-size:11.5px;color:#000;letter-spacing:0.00px;line-height:20px;font-weight:700;">4 - 10</div>
<div class="t" style="right:64.7px;top:200.2px;font-size:11.5px;color:#000;letter-spacing:0.00px;line-height:20px;font-weight:700;">11 - 30</div>
<div class="t" style="right:64.7px;top:294.2px;font-size:11.5px;color:#000;letter-spacing:0.00px;line-height:20px;font-weight:700;">31 - 100</div>
<div class="t" style="right:64.7px;top:422.3px;font-size:11.5px;color:#000;letter-spacing:0.00px;line-height:20px;font-weight:700;">101+</div>
<div class="b" style="left:26.0px;top:585.4px;width:159.9px;height:32.1px;border:1px solid #d9dce1;border-radius:6px;box-sizing:border-box;background:#fff;"></div>
<svg class="b" style="left:37.0px;top:594.3px;" width="14" height="14.5" viewBox="0 0 14 14.5"><rect x="1" y="2.2" width="12" height="11" rx="2.6" fill="none" stroke="#b0b5c0" stroke-width="1.1"/><path d="M1 5.8H13" stroke="#b0b5c0" stroke-width="1.1"/><path d="M4.3 0.8V3.4M9.7 0.8V3.4" stroke="#b0b5c0" stroke-width="1.1" stroke-linecap="round"/><path d="M4.7 8V11.2M7 8V11.2M9.3 8V11.2" stroke="#b0b5c0" stroke-width="0.75" stroke-linecap="butt"/></svg>
<div class="t" style="left:56.5px;top:591.5px;font-size:12px;color:#2a2f3a;letter-spacing:-0.00px;line-height:20px;-webkit-text-stroke:0.3px #2a2f3a;">Sep 1, 2025</div>
<svg class="b" style="left:165.0px;top:597.5px;" width="10" height="8" viewBox="0 0 10 8"><path d="M1.2 2.2 L5 6 L8.8 2.2" fill="none" stroke="#555b66" stroke-width="1.2" stroke-linecap="round" stroke-linejoin="round"/></svg>
<div class="b" style="left:194.1px;top:589.8px;width:23.4px;height:23.4px;background:#e9eaee;border-radius:12px;"></div>
<div class="t" style="left:105.8px;width:200px;text-align:center;top:591.2px;font-size:12px;color:#555;letter-spacing:0.00px;line-height:20px;-webkit-text-stroke:0.2px #555;">vs</div>
<div class="b" style="left:226.0px;top:585.4px;width:159.6px;height:32.1px;border:1px solid #d9dce1;border-radius:6px;box-sizing:border-box;background:#fff;"></div>
<svg class="b" style="left:237.0px;top:594.3px;" width="14" height="14.5" viewBox="0 0 14 14.5"><rect x="1" y="2.2" width="12" height="11" rx="2.6" fill="none" stroke="#b0b5c0" stroke-width="1.1"/><path d="M1 5.8H13" stroke="#b0b5c0" stroke-width="1.1"/><path d="M4.3 0.8V3.4M9.7 0.8V3.4" stroke="#b0b5c0" stroke-width="1.1" stroke-linecap="round"/><path d="M4.7 8V11.2M7 8V11.2M9.3 8V11.2" stroke="#b0b5c0" stroke-width="0.75" stroke-linecap="butt"/></svg>
<div class="t" style="left:256.2px;top:591.5px;font-size:12px;color:#2a2f3a;letter-spacing:0.09px;line-height:20px;-webkit-text-stroke:0.3px #2a2f3a;">Sep 20, 2025</div>
<svg class="b" style="left:364.5px;top:598.5px;" width="4" height="4" viewBox="0 0 4 4"><path d="M1 1 L2.6 2.6" stroke="#555b66" stroke-width="1.1" stroke-linecap="round"/></svg>
<svg class="b" style="left:369.0px;top:582.3px;" width="20" height="20" viewBox="0 0 20 20"><circle cx="10" cy="10" r="10" fill="#111"/><path d="M6.7 6.7 L13.3 13.3 M13.3 6.7 L6.7 13.3" stroke="#fff" stroke-width="1.8" stroke-linecap="round"/></svg>
<div class="b" style="left:402.3px;top:585.3px;width:297.6px;height:32.0px;border:1px solid #d5d9e0;border-radius:6px;box-sizing:border-box;background:#f5f7fa;"></div>
<div class="b" style="left:407.5px;top:588.5px;width:32.9px;height:25.0px;background:#fff;border-radius:5px;box-shadow:0 1px 3px rgba(0,0,0,.18);"></div>
<div class="t" style="left:415.7px;top:591.8px;font-size:14px;color:#111;letter-spacing:0.47px;line-height:20px;-webkit-text-stroke:0.35px #111;">All</div>
<div class="t" style="left:453.1px;top:591.8px;font-size:14px;color:#6b7280;letter-spacing:0.26px;line-height:20px;-webkit-text-stroke:0.15px #6b7280;">Top Performers</div>
<div class="t" style="left:572.8px;top:591.8px;font-size:14px;color:#6b7280;letter-spacing:0.56px;line-height:20px;-webkit-text-stroke:0.15px #6b7280;">Underperformers</div>
<div class="b" style="left:1496.3px;top:585.6px;width:128.2px;height:31.5px;border:1px solid #eaecef;border-radius:7px;box-sizing:border-box;background:#fff;"></div>
<svg class="b" style="left:1506.0px;top:593.5px;" width="16" height="16" viewBox="0 0 16 16"><path d="M8.6 1.3H5 A3.6 3.6 0 0 0 1.4 4.9V11 A3.6 3.6 0 0 0 5 14.6H11 A3.6 3.6 0 0 0 14.6 11V7.3" fill="none" stroke="#6b7079" stroke-width="1.1" stroke-linecap="round"/><path d="M8.6 1.3 C8.6 5 10.5 7.3 14.6 7.3 C14.6 4 12 1.3 8.6 1.3Z" fill="none" stroke="#6b7079" stroke-width="1.1" stroke-linejoin="round"/><path d="M5.8 8.3V11.2M4.6 10.2L5.8 11.4L7 10.2" fill="none" stroke="#6b7079" stroke-width="0.9" stroke-linecap="round" stroke-linejoin="round"/></svg>
<div class="t" style="left:1530.8px;top:592.1px;font-size:12px;color:#2a2f3a;letter-spacing:0.14px;line-height:20px;-webkit-text-stroke:0.3px #2a2f3a;">Export as CSV</div>
<div class="b" style="left:2.0px;top:637.7px;width:1612.0px;height:48.3px;background:#f9fafb;"></div>
<div class="b" style="left:2.0px;top:727.9px;width:1612.0px;height:41.8px;background:#e8edfd;"></div>
<div class="b" style="left:2.0px;top:685.3px;width:1612.0px;height:1.0px;background:#eceef1;"></div>
<div class="b" style="left:2.0px;top:727.4px;width:1612.0px;height:1.0px;background:#eceef1;"></div>
<div class="b" style="left:2.0px;top:769.7px;width:1612.0px;height:1.0px;background:#eceef1;"></div>
<div class="b" style="left:2.0px;top:811.5px;width:1612.0px;height:1.0px;background:#eceef1;"></div>
<div class="b" style="left:291.0px;top:637.7px;width:1.0px;height:215.8px;background:#e8eaed;"></div>
<div class="b" style="left:1614.0px;top:637.7px;width:35.0px;height:220.3px;background:#fbfbfc;border-left:1px solid #e3e5e9;box-sizing:border-box;"></div>
<div class="b" style="left:288.5px;top:654.5px;width:1.5px;height:14.5px;background:#e3e5e9;"></div>
<div class="b" style="left:489.5px;top:654.5px;width:1.0px;height:14.5px;background:#dfe2e6;"></div>
<div class="b" style="left:689.5px;top:654.5px;width:1.0px;height:14.5px;background:#dfe2e6;"></div>
<div class="b" style="left:889.5px;top:654.5px;width:1.0px;height:14.5px;background:#dfe2e6;"></div>
<div class="b" style="left:1089.5px;top:654.5px;width:1.0px;height:14.5px;background:#dfe2e6;"></div>
<div class="b" style="left:1289.5px;top:654.5px;width:1.0px;height:14.5px;background:#dfe2e6;"></div>
<div class="b" style="left:1489.5px;top:654.5px;width:1.0px;height:14.5px;background:#dfe2e6;"></div>
<div class="t" style="left:68.3px;top:651.5px;font-size:14px;color:#1f2430;letter-spacing:0.42px;line-height:20px;-webkit-text-stroke:0.4px #1f2430;">Keyword</div>
<div class="t" style="left:308.2px;top:651.5px;font-size:14px;color:#1f2430;letter-spacing:0.25px;line-height:20px;-webkit-text-stroke:0.4px #1f2430;">Type</div>
<div class="t" style="left:578.7px;top:651.5px;font-size:14px;color:#1f2430;letter-spacing:0.32px;line-height:20px;-webkit-text-stroke:0.4px #1f2430;">Volume</div>
<div class="t" style="left:775.3px;top:651.5px;font-size:14px;color:#1f2430;letter-spacing:0.79px;line-height:20px;-webkit-text-stroke:0.4px #1f2430;">Chance</div>
<div class="t" style="left:941.4px;top:651.5px;font-size:14px;color:#1f2430;letter-spacing:0.27px;line-height:20px;-webkit-text-stroke:0.4px #1f2430;">Ranked Apps</div>
<div class="t" style="left:1108.3px;top:651.5px;font-size:14px;color:#1f2430;letter-spacing:-0.11px;line-height:20px;-webkit-text-stroke:0.4px #1f2430;">Rank (Sep 01)</div>
<div class="t" style="left:1308.5px;top:651.5px;font-size:14px;color:#1f2430;letter-spacing:-0.13px;line-height:20px;-webkit-text-stroke:0.4px #1f2430;">Rank (Sep 20)</div>
<div class="t" style="left:1508.5px;top:651.5px;font-size:14px;color:#1f2430;letter-spacing:0.62px;line-height:20px;-webkit-text-stroke:0.4px #1f2430;">Movement</div>
<svg class="b" style="left:435.8px;top:655.5px;" width="16" height="12" viewBox="0 0 16 12"><path d="M1.4 1.8H14.6M4.2 6H11.8M6.2 10.2H9.8" stroke="#b3b7bf" stroke-width="1.25" stroke-linecap="round"/></svg>
<svg class="b" style="left:465.9px;top:654.5px;" width="4" height="14" viewBox="0 0 4 14"><circle cx="2" cy="2.3" r="0.95" fill="#8a8f98"/><circle cx="2" cy="7" r="0.95" fill="#8a8f98"/><circle cx="2" cy="11.7" r="0.95" fill="#8a8f98"/></svg>
<svg class="b" style="left:635.9px;top:655.5px;" width="16" height="12" viewBox="0 0 16 12"><path d="M1.4 1.8H14.6M4.2 6H11.8M6.2 10.2H9.8" stroke="#b3b7bf" stroke-width="1.25" stroke-linecap="round"/></svg>
<svg class="b" style="left:666.0px;top:654.5px;" width="4" height="14" viewBox="0 0 4 14"><circle cx="2" cy="2.3" r="0.95" fill="#8a8f98"/><circle cx="2" cy="7" r="0.95" fill="#8a8f98"/><circle cx="2" cy="11.7" r="0.95" fill="#8a8f98"/></svg>
<svg class="b" style="left:836.0px;top:655.5px;" width="16" height="12" viewBox="0 0 16 12"><path d="M1.4 1.8H14.6M4.2 6H11.8M6.2 10.2H9.8" stroke="#b3b7bf" stroke-width="1.25" stroke-linecap="round"/></svg>
<svg class="b" style="left:866.1px;top:654.5px;" width="4" height="14" viewBox="0 0 4 14"><circle cx="2" cy="2.3" r="0.95" fill="#8a8f98"/><circle cx="2" cy="7" r="0.95" fill="#8a8f98"/><circle cx="2" cy="11.7" r="0.95" fill="#8a8f98"/></svg>
<svg class="b" style="left:1036.0px;top:655.5px;" width="16" height="12" viewBox="0 0 16 12"><path d="M1.4 1.8H14.6M4.2 6H11.8M6.2 10.2H9.8" stroke="#b3b7bf" stroke-width="1.25" stroke-linecap="round"/></svg>
<svg class="b" style="left:1066.1px;top:654.5px;" width="4" height="14" viewBox="0 0 4 14"><circle cx="2" cy="2.3" r="0.95" fill="#8a8f98"/><circle cx="2" cy="7" r="0.95" fill="#8a8f98"/><circle cx="2" cy="11.7" r="0.95" fill="#8a8f98"/></svg>
<svg class="b" style="left:1235.8px;top:655.5px;" width="16" height="12" viewBox="0 0 16 12"><path d="M1.4 1.8H14.6M4.2 6H11.8M6.2 10.2H9.8" stroke="#b3b7bf" stroke-width="1.25" stroke-linecap="round"/></svg>
<svg class="b" style="left:1265.9px;top:654.5px;" width="4" height="14" viewBox="0 0 4 14"><circle cx="2" cy="2.3" r="0.95" fill="#8a8f98"/><circle cx="2" cy="7" r="0.95" fill="#8a8f98"/><circle cx="2" cy="11.7" r="0.95" fill="#8a8f98"/></svg>
<svg class="b" style="left:1435.8px;top:655.5px;" width="16" height="12" viewBox="0 0 16 12"><path d="M1.4 1.8H14.6M4.2 6H11.8M6.2 10.2H9.8" stroke="#b3b7bf" stroke-width="1.25" stroke-linecap="round"/></svg>
<svg class="b" style="left:1465.9px;top:654.5px;" width="4" height="14" viewBox="0 0 4 14"><circle cx="2" cy="2.3" r="0.95" fill="#8a8f98"/><circle cx="2" cy="7" r="0.95" fill="#8a8f98"/><circle cx="2" cy="11.7" r="0.95" fill="#8a8f98"/></svg>
<div class="b" style="left:232.0px;top:650.0px;width:24.0px;height:23.4px;background:#bfd0fb;border-radius:4px;"></div>
<svg class="b" style="left:232.0px;top:650.0px;" width="24" height="24" viewBox="0 0 24 24"><path d="M5.6 7.2H13.8M7.9 11.4H16.4M10.2 15.4H13.8" stroke="#4a7df0" stroke-width="1.4" stroke-linecap="round"/><circle cx="18.1" cy="5" r="2.6" fill="#3f78f1"/></svg>
<svg class="b" style="left:266.0px;top:654.5px;" width="4" height="14" viewBox="0 0 4 14"><circle cx="2" cy="2.3" r="0.95" fill="#8a8f98"/><circle cx="2" cy="7" r="0.95" fill="#8a8f98"/><circle cx="2" cy="11.7" r="0.95" fill="#8a8f98"/></svg>
<div class="b" style="left:18.3px;top:650.1px;width:23.3px;height:23.2px;border:1px solid #e9ebee;border-radius:6px;box-sizing:border-box;background:#fff;box-shadow:0 1px 2px rgba(0,0,0,.05);"></div>
<svg class="b" style="left:24.0px;top:655.7px;" width="12" height="12" viewBox="0 0 12 12"><path d="M6 1.5V10.5M1.5 6H10.5" stroke="#7b808a" stroke-width="1.2" stroke-linecap="round"/></svg>
<div class="b" style="left:18.3px;top:692.0px;width:23.3px;height:23.2px;border:1px solid #e9ebee;border-radius:6px;box-sizing:border-box;background:#fff;box-shadow:0 1px 2px rgba(0,0,0,.05);"></div>
<svg class="b" style="left:24.0px;top:697.6px;" width="12" height="12" viewBox="0 0 12 12"><path d="M6 1.5V10.5M1.5 6H10.5" stroke="#7b808a" stroke-width="1.2" stroke-linecap="round"/></svg>
<div class="b" style="left:18.3px;top:776.0px;width:23.3px;height:23.2px;border:1px solid #e9ebee;border-radius:6px;box-sizing:border-box;background:#fff;box-shadow:0 1px 2px rgba(0,0,0,.05);"></div>
<svg class="b" style="left:24.0px;top:781.6px;" width="12" height="12" viewBox="0 0 12 12"><path d="M6 1.5V10.5M1.5 6H10.5" stroke="#7b808a" stroke-width="1.2" stroke-linecap="round"/></svg>
<div class="b" style="left:18.3px;top:817.9px;width:23.3px;height:23.2px;border:1px solid #e9ebee;border-radius:6px;box-sizing:border-box;background:#fff;box-shadow:0 1px 2px rgba(0,0,0,.05);"></div>
<svg class="b" style="left:24.0px;top:823.5px;" width="12" height="12" viewBox="0 0 12 12"><path d="M6 1.5V10.5M1.5 6H10.5" stroke="#7b808a" stroke-width="1.2" stroke-linecap="round"/></svg>
<svg class="b" style="left:18.3px;top:734.0px;" width="23.5" height="23.5" viewBox="0 0 23.5 23.5"><rect x="0" y="0" width="23.5" height="23.5" rx="5" fill="#2fb567"/><path d="M8.3 12 L10.8 14.4 L15.4 9.6" fill="none" stroke="#fff" stroke-width="1.5" stroke-linecap="round" stroke-linejoin="round"/></svg>
<div class="t" style="left:70.0px;top:695.8px;font-size:16px;color:#111;letter-spacing:-0.12px;line-height:20px;">keyword 1</div>
<div class="t" style="left:68.3px;top:735.0px;font-size:16px;color:#111;letter-spacing:0.27px;line-height:20px;">keyword 2</div>
<div class="t" style="left:68.3px;top:780.8px;font-size:16px;color:#111;letter-spacing:0.33px;line-height:20px;">keyword 3</div>
<div class="t" style="left:67.5px;top:819.8px;font-size:16px;color:#111;letter-spacing:0.45px;line-height:20px;">keyword 4</div>
<div class="b" style="left:308.2px;top:699.7px;width:80.8px;height:15.6px;background:#c7d7fb;border-radius:8px;"></div>
<div class="t" style="left:317.4px;top:697.0px;font-size:10.7px;color:#2b3f80;letter-spacing:0.16px;line-height:20px;font-weight:700;">APPLE ADS</div>
<div class="b" style="left:397.3px;top:699.7px;width:25.0px;height:15.6px;background:#fde3cf;border-radius:8px;"></div>
<div class="t" style="left:309.8px;width:200px;text-align:center;top:697.0px;font-size:10.7px;color:#e97a30;letter-spacing:0.00px;line-height:20px;font-weight:700;">B</div>
<div class="b" style="left:431.0px;top:699.7px;width:28.0px;height:15.6px;background:#d3f5de;border-radius:8px;"></div>
<div class="t" style="left:345.0px;width:200px;text-align:center;top:697.0px;font-size:10.7px;color:#176b36;letter-spacing:0.00px;line-height:20px;font-weight:700;">M</div>
<div class="b" style="left:308.2px;top:741.6px;width:25.5px;height:15.6px;background:#fde3cf;border-radius:8px;"></div>
<div class="t" style="left:220.9px;width:200px;text-align:center;top:738.9px;font-size:10.7px;color:#e97a30;letter-spacing:0.00px;line-height:20px;font-weight:700;">B</div>
<div class="b" style="left:308.2px;top:783.5px;width:25.5px;height:15.6px;background:#fde3cf;border-radius:8px;"></div>
<div class="t" style="left:220.9px;width:200px;text-align:center;top:780.8px;font-size:10.7px;color:#e97a30;letter-spacing:0.00px;line-height:20px;font-weight:700;">B</div>
<div class="b" style="left:308.2px;top:825.0px;width:25.5px;height:15.6px;background:#fde3cf;border-radius:8px;"></div>
<div class="t" style="left:220.9px;width:200px;text-align:center;top:822.3px;font-size:10.7px;color:#e97a30;letter-spacing:0.00px;line-height:20px;font-weight:700;">B</div>
<div class="t" style="right:1009.0px;top:697.2px;font-size:14px;color:#222;letter-spacing:0.20px;line-height:20px;-webkit-text-stroke:0.15px #222;">49</div>
<svg class="b" style="left:657.0px;top:700.4px;" width="14.4" height="14.4" viewBox="0 0 14.4 14.4"><rect x="0.7" y="0.7" width="13" height="13" rx="3.4" fill="none" stroke="#5b606a" stroke-width="1.15"/><path d="M3.6 9 L5.8 6.6 L7.6 8 L10.4 5.3" fill="none" stroke="#5b606a" stroke-width="1" stroke-linecap="round" stroke-linejoin="round"/></svg>
<div class="t" style="right:772.9px;top:697.2px;font-size:14px;color:#222;letter-spacing:0.20px;line-height:20px;-webkit-text-stroke:0.15px #222;">75</div>
<div class="t" style="right:573.0px;top:697.2px;font-size:14px;color:#222;letter-spacing:0.20px;line-height:20px;-webkit-text-stroke:0.15px #222;">232</div>
<div class="t" style="right:401.4px;top:697.2px;font-size:14px;color:#222;letter-spacing:0.20px;line-height:20px;-webkit-text-stroke:0.15px #222;">1</div>
<svg class="b" style="left:1257.0px;top:700.4px;" width="14.4" height="14.4" viewBox="0 0 14.4 14.4"><rect x="0.7" y="0.7" width="13" height="13" rx="3.4" fill="none" stroke="#5b606a" stroke-width="1.15"/><path d="M3.6 9 L5.8 6.6 L7.6 8 L10.4 5.3" fill="none" stroke="#5b606a" stroke-width="1" stroke-linecap="round" stroke-linejoin="round"/></svg>
<div class="t" style="right:201.4px;top:697.2px;font-size:14px;color:#222;letter-spacing:0.20px;line-height:20px;-webkit-text-stroke:0.15px #222;">1</div>
<svg class="b" style="left:1457.0px;top:700.4px;" width="14.4" height="14.4" viewBox="0 0 14.4 14.4"><rect x="0.7" y="0.7" width="13" height="13" rx="3.4" fill="none" stroke="#5b606a" stroke-width="1.15"/><path d="M3.6 9 L5.8 6.6 L7.6 8 L10.4 5.3" fill="none" stroke="#5b606a" stroke-width="1" stroke-linecap="round" stroke-linejoin="round"/></svg>
<div class="t" style="right:1009.0px;top:739.2px;font-size:14px;color:#222;letter-spacing:0.20px;line-height:20px;-webkit-text-stroke:0.15px #222;">5</div>
<div class="b" style="left:652.0px;top:737.5px;width:24.0px;height:23.8px;background:#fff;border-radius:5px;"></div>
<svg class="b" style="left:657.0px;top:742.4px;" width="14.4" height="14.4" viewBox="0 0 14.4 14.4"><rect x="0.7" y="0.7" width="13" height="13" rx="3.4" fill="none" stroke="#5b606a" stroke-width="1.15"/><path d="M3.6 9 L5.8 6.6 L7.6 8 L10.4 5.3" fill="none" stroke="#5b606a" stroke-width="1" stroke-linecap="round" stroke-linejoin="round"/></svg>
<div class="t" style="right:772.9px;top:739.2px;font-size:14px;color:#222;letter-spacing:0.20px;line-height:20px;-webkit-text-stroke:0.15px #222;">100</div>
<div class="t" style="right:573.0px;top:739.2px;font-size:14px;color:#222;letter-spacing:0.20px;line-height:20px;-webkit-text-stroke:0.15px #222;">0</div>
<div class="t" style="right:401.4px;top:739.2px;font-size:14px;color:#222;letter-spacing:0.20px;line-height:20px;-webkit-text-stroke:0.15px #222;">1</div>
<div class="b" style="left:1252.0px;top:737.5px;width:24.0px;height:23.8px;background:#fff;border-radius:5px;"></div>
<svg class="b" style="left:1257.0px;top:742.4px;" width="14.4" height="14.4" viewBox="0 0 14.4 14.4"><rect x="0.7" y="0.7" width="13" height="13" rx="3.4" fill="none" stroke="#5b606a" stroke-width="1.15"/><path d="M3.6 9 L5.8 6.6 L7.6 8 L10.4 5.3" fill="none" stroke="#5b606a" stroke-width="1" stroke-linecap="round" stroke-linejoin="round"/></svg>
<div class="t" style="right:201.4px;top:739.2px;font-size:14px;color:#222;letter-spacing:0.20px;line-height:20px;-webkit-text-stroke:0.15px #222;">Unranked</div>
<div class="b" style="left:1452.0px;top:737.5px;width:24.0px;height:23.8px;background:#fff;border-radius:5px;"></div>
<svg class="b" style="left:1457.0px;top:742.4px;" width="14.4" height="14.4" viewBox="0 0 14.4 14.4"><rect x="0.7" y="0.7" width="13" height="13" rx="3.4" fill="none" stroke="#5b606a" stroke-width="1.15"/><path d="M3.6 9 L5.8 6.6 L7.6 8 L10.4 5.3" fill="none" stroke="#5b606a" stroke-width="1" stroke-linecap="round" stroke-linejoin="round"/></svg>
<div class="t" style="right:1009.0px;top:781.2px;font-size:14px;color:#222;letter-spacing:0.20px;line-height:20px;-webkit-text-stroke:0.15px #222;">5</div>
<svg class="b" style="left:657.0px;top:784.4px;" width="14.4" height="14.4" viewBox="0 0 14.4 14.4"><rect x="0.7" y="0.7" width="13" height="13" rx="3.4" fill="none" stroke="#5b606a" stroke-width="1.15"/><path d="M3.6 9 L5.8 6.6 L7.6 8 L10.4 5.3" fill="none" stroke="#5b606a" stroke-width="1" stroke-linecap="round" stroke-linejoin="round"/></svg>
<div class="t" style="right:772.9px;top:781.2px;font-size:14px;color:#222;letter-spacing:0.20px;line-height:20px;-webkit-text-stroke:0.15px #222;">89</div>
<div class="t" style="right:573.0px;top:781.2px;font-size:14px;color:#222;letter-spacing:0.20px;line-height:20px;-webkit-text-stroke:0.15px #222;">233</div>
<div class="t" style="right:401.4px;top:781.2px;font-size:14px;color:#222;letter-spacing:0.20px;line-height:20px;-webkit-text-stroke:0.15px #222;">1</div>
<svg class="b" style="left:1257.0px;top:784.4px;" width="14.4" height="14.4" viewBox="0 0 14.4 14.4"><rect x="0.7" y="0.7" width="13" height="13" rx="3.4" fill="none" stroke="#5b606a" stroke-width="1.15"/><path d="M3.6 9 L5.8 6.6 L7.6 8 L10.4 5.3" fill="none" stroke="#5b606a" stroke-width="1" stroke-linecap="round" stroke-linejoin="round"/></svg>
<div class="t" style="right:201.4px;top:781.2px;font-size:14px;color:#222;letter-spacing:0.20px;line-height:20px;-webkit-text-stroke:0.15px #222;">1</div>
<svg class="b" style="left:1457.0px;top:784.4px;" width="14.4" height="14.4" viewBox="0 0 14.4 14.4"><rect x="0.7" y="0.7" width="13" height="13" rx="3.4" fill="none" stroke="#5b606a" stroke-width="1.15"/><path d="M3.6 9 L5.8 6.6 L7.6 8 L10.4 5.3" fill="none" stroke="#5b606a" stroke-width="1" stroke-linecap="round" stroke-linejoin="round"/></svg>
<div class="t" style="right:1009.0px;top:823.0px;font-size:14px;color:#222;letter-spacing:0.20px;line-height:20px;-webkit-text-stroke:0.15px #222;">5</div>
<svg class="b" style="left:657.0px;top:826.2px;" width="14.4" height="14.4" viewBox="0 0 14.4 14.4"><rect x="0.7" y="0.7" width="13" height="13" rx="3.4" fill="none" stroke="#5b606a" stroke-width="1.15"/><path d="M3.6 9 L5.8 6.6 L7.6 8 L10.4 5.3" fill="none" stroke="#5b606a" stroke-width="1" stroke-linecap="round" stroke-linejoin="round"/></svg>
<div class="t" style="right:772.9px;top:823.0px;font-size:14px;color:#222;letter-spacing:0.20px;line-height:20px;-webkit-text-stroke:0.15px #222;">100</div>
<div class="t" style="right:573.0px;top:823.0px;font-size:14px;color:#222;letter-spacing:0.20px;line-height:20px;-webkit-text-stroke:0.15px #222;">0</div>
<div class="t" style="right:401.4px;top:823.0px;font-size:14px;color:#222;letter-spacing:0.20px;line-height:20px;-webkit-text-stroke:0.15px #222;">1</div>
<svg class="b" style="left:1257.0px;top:826.2px;" width="14.4" height="14.4" viewBox="0 0 14.4 14.4"><rect x="0.7" y="0.7" width="13" height="13" rx="3.4" fill="none" stroke="#5b606a" stroke-width="1.15"/><path d="M3.6 9 L5.8 6.6 L7.6 8 L10.4 5.3" fill="none" stroke="#5b606a" stroke-width="1" stroke-linecap="round" stroke-linejoin="round"/></svg>
<div class="t" style="right:201.4px;top:823.0px;font-size:14px;color:#222;letter-spacing:0.20px;line-height:20px;-webkit-text-stroke:0.15px #222;">Unranked</div>
<svg class="b" style="left:1457.0px;top:826.2px;" width="14.4" height="14.4" viewBox="0 0 14.4 14.4"><rect x="0.7" y="0.7" width="13" height="13" rx="3.4" fill="none" stroke="#5b606a" stroke-width="1.15"/><path d="M3.6 9 L5.8 6.6 L7.6 8 L10.4 5.3" fill="none" stroke="#5b606a" stroke-width="1" stroke-linecap="round" stroke-linejoin="round"/></svg>
<svg class="b" style="left:1625.2px;top:662.8px;" width="14" height="14" viewBox="0 0 14 14"><rect x="0.7" y="0.7" width="12.6" height="12.6" rx="2" fill="none" stroke="#8a8f98" stroke-width="1.1"/><path d="M0.7 4.6H13.3M4.8 4.6V13.3" stroke="#8a8f98" stroke-width="1.1"/></svg>
<div class="t" style="left:1581.5px;top:704.7px;width:100px;text-align:center;font-size:14px;color:#333;line-height:20px;letter-spacing:0.3px;transform:rotate(90deg);">Columns</div>
<svg class="b" style="left:1624.0px;top:795.0px;" width="16" height="12" viewBox="0 0 16 12"><path d="M1.4 1.8H14.6M4.2 6H11.8M6.2 10.2H9.8" stroke="#b3b7bf" stroke-width="1.25" stroke-linecap="round"/></svg>
<div class="t" style="left:1581.5px;top:825.7px;width:100px;text-align:center;font-size:14px;color:#333;line-height:20px;letter-spacing:0.3px;transform:rotate(90deg);">Filters</div>
<svg class="b" style="left:1596.0px;top:801.6px;filter:drop-shadow(0 1px 3px rgba(0,0,0,.18));" width="47" height="47" viewBox="0 0 47 47"><circle cx="23.8" cy="23.5" r="23.9" fill="#0c1129"/><g transform="translate(0,-3.2)"><path d="M18 16.5H31.5A1.5 1.5 0 0 1 33 18V27.5" fill="none" stroke="#fff" stroke-width="1.6" stroke-linecap="round" stroke-linejoin="round"/><path d="M14.5 20H28.5A1 1 0 0 1 29.5 21V30A1 1 0 0 1 28.5 31H19L14 34.5V21A1 1 0 0 1 14.5 20Z" fill="#0c1129" stroke="#fff" stroke-width="1.6" stroke-linejoin="round"/></g></svg>
</body></html>
